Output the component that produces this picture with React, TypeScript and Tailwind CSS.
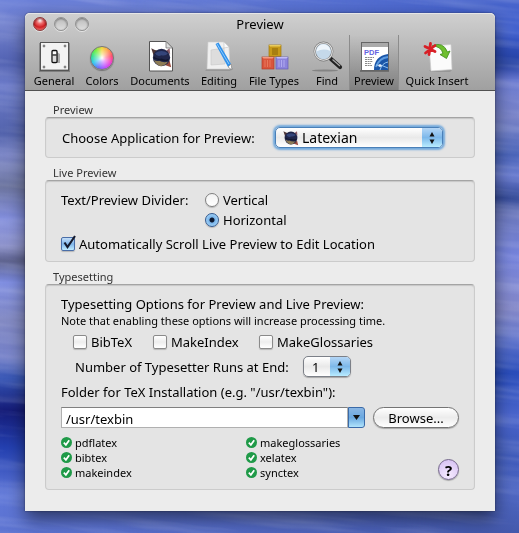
import { useState } from "react";
import type { ReactNode } from "react";

function Wallpaper() {
  return (
    <svg aria-hidden="true" className="fixed inset-0 -z-10 h-full w-full" viewBox="0 0 519 533" preserveAspectRatio="none">
      <defs>
        <linearGradient id="wallLeft" x1="0" y1="0" x2="0" y2="1">
          <stop offset="0" stopColor="#6a7fd8" />
          <stop offset=".05" stopColor="#7180cc" />
          <stop offset=".12" stopColor="#5161b2" />
          <stop offset=".16" stopColor="#6d7cca" />
          <stop offset=".25" stopColor="#5363ac" />
          <stop offset=".29" stopColor="#7b86c6" />
          <stop offset=".35" stopColor="#6d759f" />
          <stop offset=".41" stopColor="#7f8bdb" />
          <stop offset=".46" stopColor="#8f94cc" />
          <stop offset=".49" stopColor="#5a5f8c" />
          <stop offset=".53" stopColor="#7c8be0" />
          <stop offset=".6" stopColor="#8188c2" />
          <stop offset=".67" stopColor="#7480c8" />
          <stop offset=".71" stopColor="#3554b4" />
          <stop offset=".77" stopColor="#151c78" />
          <stop offset=".84" stopColor="#2440b0" />
          <stop offset=".93" stopColor="#5f77d8" />
          <stop offset="1" stopColor="#5b72d0" />
        </linearGradient>
        <linearGradient id="wallRight" x1="0" y1="0" x2="0" y2="1">
          <stop offset="0" stopColor="#4a66cc" />
          <stop offset=".06" stopColor="#3a5acc" />
          <stop offset=".12" stopColor="#2440a2" />
          <stop offset=".15" stopColor="#6878d0" />
          <stop offset=".22" stopColor="#7a84c8" />
          <stop offset=".29" stopColor="#4862b8" />
          <stop offset=".33" stopColor="#6a7cd0" />
          <stop offset=".37" stopColor="#344a98" />
          <stop offset=".4" stopColor="#6c78bc" />
          <stop offset=".48" stopColor="#7583dc" />
          <stop offset=".58" stopColor="#8488c8" />
          <stop offset=".64" stopColor="#5f74cc" />
          <stop offset=".7" stopColor="#2347b8" />
          <stop offset=".78" stopColor="#4c66cc" />
          <stop offset=".85" stopColor="#3a56b8" />
          <stop offset=".92" stopColor="#5068c4" />
          <stop offset="1" stopColor="#4459ac" />
        </linearGradient>
        <linearGradient id="wallFade" x1="0" y1="0" x2="1" y2="0">
          <stop offset=".2" stopColor="#000" />
          <stop offset=".9" stopColor="#fff" />
        </linearGradient>
        <mask id="wallMask">
          <rect width="519" height="533" fill="url(#wallFade)" />
        </mask>
        <filter id="strokes" x="0" y="0" width="1" height="1">
          <feTurbulence type="fractalNoise" baseFrequency="0.008 0.09" numOctaves="3" seed="4" />
          <feColorMatrix values="0 0 0 0 .75  0 0 0 0 .78  0 0 0 0 .95  1.6 0 0 0 -.65" />
        </filter>
      </defs>
      <rect width="519" height="533" fill="url(#wallLeft)" />
      <rect width="519" height="533" fill="url(#wallRight)" mask="url(#wallMask)" />
      <g transform="rotate(6 260 266)">
        <rect x="-60" y="-60" width="640" height="660" filter="url(#strokes)" opacity=".28" />
      </g>
    </svg>
  );
}

function Planet() {
  return (
    <>
      <path d="M-9.500 -8.500 L-7 -1 L-1 -6 Q-6 -6 -9.500 -8.500Z" fill="#4d3536" />
      <path d="M9 9 L7.500 3 L3 7Z" fill="#9a4a3c" />
      <path d="M7.500 -8.500 L8 -3 L4 -6Z" fill="#8b5a65" />
      <circle r="8" fill="#20264a" />
      <path d="M-6 -4 Q0 -8 6 -4 Q4 -1 0 -2 Q-4 0 -6 -4Z" fill="#34457a" />
      <path d="M-7 2 Q-5 4 -2 3 Q1 5 6 4 Q3 8 -1 8 Q-6 6 -7 2Z" fill="#8d7c56" />
      <path d="M-7 -1 Q-4 2 0 1 Q4 3 7 1 L6 3 Q0 4 -7 1Z" fill="#12172f" />
    </>
  );
}

const icon = "block size-8 shrink-0 overflow-visible";

function SwitchIcon() {
  return (
    <svg viewBox="0 0 32 32" className={icon} aria-hidden="true">
      <rect x="1" y="3" width="31" height="29" fill="#000" opacity=".25" />
      <rect x="2.5" y="2.5" width="28" height="28" fill="#f3f3f3" stroke="#555" />
      <path d="M3 29.5H30" stroke="#b5b5b5" />
      {[[6, 6], [27, 6], [6, 27], [27, 27]].map(([x, y]) => (
        <circle key={`${x}-${y}`} cx={x} cy={y} r="1.2" fill="#555" stroke="#bbb" strokeWidth=".6" />
      ))}
      <path d="M19 12l3 2v9h-4z" fill="#aaa" />
      <rect x="14" y="10.5" width="5" height="12" rx="1" fill="#fff" stroke="#111" strokeWidth="1.3" />
      <path d="M14.5 15h4" stroke="#111" strokeWidth="1.3" />
      <rect x="15" y="16" width="3" height="5" fill="#ddd" />
    </svg>
  );
}

function ColorsIcon() {
  return (
    <span className="flex size-8 items-end justify-center pb-0.5" aria-hidden="true">
      <span className="size-6 rounded-full border border-[#777] bg-[radial-gradient(circle,#fff_0%,#ffffff88_25%,#ffffff00_65%),conic-gradient(from_0deg,#f5d840,#ff9a50,#ff4a70,#ee40d0,#c050ff,#7070ff,#30c8f0,#30e090,#70f040,#f5d840)] shadow-[0_1px_1px_#0005]" />
    </span>
  );
}

function DocumentIcon() {
  return (
    <svg viewBox="0 0 32 32" className={icon} aria-hidden="true">
      <path d="M5.5 1.5H22L28.5 8V31H5.5Z" fill="#fff" stroke="#555" />
      <path d="M22 1.5V8h6.5Z" fill="#ddd" stroke="#777" strokeWidth=".8" />
      <g transform="translate(17.5 17.5) scale(1.08)">
        <Planet />
      </g>
    </svg>
  );
}

function EditingIcon() {
  return (
    <svg viewBox="0 0 32 32" className={icon} aria-hidden="true">
      <path d="M2 31L5 28H30L27 31Z" fill="#888" opacity=".6" />
      <path d="M5 2H21L26 7L27 29H4Z" fill="#f0f0f0" stroke="#ccc" strokeWidth=".6" />
      <path d="M8 10L21 8L22 24L8 25Z" fill="#ddd" stroke="#c6c6c6" strokeWidth=".6" />
      <path d="M21 2v6l5-1Z" fill="#fafafa" stroke="#bbb" strokeWidth=".5" />
      <path d="M12.5 4L15.5 2.5L28 24L25 27Z" fill="#3091ea" />
      <path d="M14 4L26 24" stroke="#8ccaff" strokeWidth="1" />
      <path d="M25 27L28 24L29 30Z" fill="#fff" stroke="#777" strokeWidth=".6" />
    </svg>
  );
}

function BlocksIcon() {
  return (
    <svg viewBox="0 0 32 32" className={icon} aria-hidden="true">
      <rect x="11" y="5" width="12" height="11.5" fill="#c79a19" stroke="#a27a10" strokeWidth=".7" />
      <rect x="14" y="8" width="6" height="7" fill="#a87f10" />
      <path d="M11 5h12l-1 1.5H12Z" fill="#e8cc60" />
      <rect x="4" y="17" width="12" height="12" fill="#d9553c" stroke="#b23c2a" strokeWidth=".7" />
      <path d="M7 20v7M9.500 20v7M12 20v7" stroke="#e8785c" />
      <path d="M4 17h12l-1.500 1.500h-9Z" fill="#f39a80" />
      <rect x="18" y="17" width="12" height="12" fill="#8c84dc" stroke="#655cb4" strokeWidth=".7" />
      <path d="M21 20v7M23.500 20v7M26 20v7" stroke="#b0aaf0" />
      <path d="M18 17h12l-1.500 1.500h-9Z" fill="#c2bdf8" />
    </svg>
  );
}

function FindIcon() {
  return (
    <svg viewBox="0 0 32 32" className={icon} aria-hidden="true">
      <ellipse cx="14" cy="30.5" rx="13" ry="1" fill="#555" opacity=".45" />
      <path d="M20 19L29 27" stroke="#222" strokeWidth="4.2" strokeLinecap="round" />
      <path d="M21.5 19.500L29 26" stroke="#aaa" strokeWidth="1.2" />
      <circle cx="12.5" cy="11.5" r="8.8" fill="#c5d9ea" stroke="#777" strokeWidth="2.2" />
      <circle cx="12.5" cy="11.5" r="8.8" fill="none" stroke="#e4e4e4" strokeWidth="1.1" />
      <path d="M5.500 11.500a7 7 0 0 1 14-.5Q12 8 5.500 11.500Z" fill="#eef5fb" />
    </svg>
  );
}

function PdfIcon() {
  return (
    <svg viewBox="0 0 32 32" className={icon} aria-hidden="true">
      <rect x="2" y="30" width="29" height="2" fill="#000" opacity=".25" />
      <rect x="3.5" y="2.5" width="27" height="28" fill="#fff" stroke="#666" />
      <rect x="4" y="3" width="26" height="4" fill="#aaa" />
      <text x="6" y="14.5" fontSize="7.5" fontWeight="bold" fill="#6463e0" fontFamily="Liberation Sans, sans-serif">PDF</text>
      <path d="M7 17.5h9M7 19.5h7M7 21.5h8M7 23.5h6M7 25.5h7" stroke="#888" strokeDasharray="2 .6" />
      <path d="M30 14Q16 16 16 30H30Z" fill="#1a56a8" />
      <path d="M30 17Q21 18 18 27" fill="none" stroke="#5d9be0" strokeWidth="2" />
      <path d="M30 22Q24 23 22 30M18 25Q25 25 30 28" fill="none" stroke="#9ccdf6" strokeWidth=".9" />
      <circle cx="22" cy="25.5" r="1.6" fill="#fff" opacity=".8" />
    </svg>
  );
}

function InsertIcon() {
  return (
    <svg viewBox="0 0 32 32" className={icon} aria-hidden="true">
      <path d="M8 30L31 30L29 32H10Z" fill="#777" opacity=".4" />
      <path d="M8 6L30 4.5L31 29.5L10 31Z" fill="#fbfbfb" stroke="#ccc" strokeWidth=".7" />
      <path d="M11 6Q22 1 26.5 12L29 11L25.5 18.5L19 14.5L22 13.5Q20 6 11 6Z" fill="#6fbf30" stroke="#3c8a1c" strokeWidth=".8" />
      <path d="M9.500 3.500L8 14.500M4 6.500L14 11.500M14 5.500L4.500 13" stroke="#d81f26" strokeWidth="2.800" strokeLinecap="round" />
    </svg>
  );
}

const tools: { label: string; width: string; art: ReactNode }[] = [
  { label: "General", width: "w-[50px]", art: <SwitchIcon /> },
  { label: "Colors", width: "w-[46px]", art: <ColorsIcon /> },
  { label: "Documents", width: "w-[70px]", art: <DocumentIcon /> },
  { label: "Editing", width: "w-[48px]", art: <EditingIcon /> },
  { label: "File Types", width: "w-[62px]", art: <BlocksIcon /> },
  { label: "Find", width: "w-[44px]", art: <FindIcon /> },
  { label: "Preview", width: "w-[50px]", art: <PdfIcon /> },
  { label: "Quick Insert", width: "w-[76px]", art: <InsertIcon /> },
];

function TrafficLight({ label, tone }: { label: string; tone: string }) {
  return (
    <button
      aria-label={label}
      className={`size-3.5 rounded-full border shadow-[0_1px_0_#fff8,inset_0_1px_2px_#0006] ${tone}`}
    />
  );
}

function Header() {
  const [active, setActive] = useState("Preview");
  return (
    <header className="rounded-t-[5px] border-b border-[#515151] bg-linear-to-b from-[#d0d0d0] to-[#a0a0a0] shadow-[inset_0_1px_0_#e6e6e6]">
      <div className="grid h-[22px] grid-cols-[1fr_auto_1fr] items-center px-2">
        <div className="flex gap-[7px]">
          <TrafficLight label="Close" tone="border-[#8e3a3a] bg-[radial-gradient(circle_at_50%_20%,#fff_0%,#ee6a6a_30%,#d01f22_60%,#ff9c94_100%)]" />
          <TrafficLight label="Minimize" tone="border-[#929292] bg-linear-to-b from-[#bcbcbc] to-[#dedede]" />
          <TrafficLight label="Zoom" tone="border-[#929292] bg-linear-to-b from-[#bcbcbc] to-[#dedede]" />
        </div>
        <h1 className="text-[13px]">Preview</h1>
      </div>
      <nav className="flex h-[55px] pl-1" aria-label="Preference panes">
        {tools.map((t) => (
          <button
            key={t.label}
            aria-pressed={active === t.label}
            onClick={() => setActive(t.label)}
            className={`flex shrink-0 flex-col items-center pt-[5px] text-[11px] leading-[18px] whitespace-nowrap ${t.width} ${
              active === t.label
                ? "border-x border-[#8c8c8c] bg-linear-to-b from-[#0000] to-[#0003]"
                : ""
            }`}
          >
            {t.art}
            {t.label}
          </button>
        ))}
      </nav>
    </header>
  );
}

function Group({ title, className, children }: { title: string; className: string; children: ReactNode }) {
  return (
    <section>
      <h2 className="pl-2 text-[11px] leading-[14px] text-[#333]">{title}</h2>
      <div className={`rounded-[4px] border border-[#cbcbcb] border-t-[#a4a4a4] bg-[#e4e4e4] px-[15px] shadow-[inset_0_1px_1px_#0002] ${className}`}>
        {children}
      </div>
    </section>
  );
}

function Arrows() {
  return (
    <span className="pointer-events-none absolute inset-y-px right-px flex w-5 items-center justify-center rounded-r-[4px] bg-linear-to-b from-[#b4d6f6] via-[#7db8ea] to-[#b8ecff]">
      <svg viewBox="0 0 6 12" className="h-3 w-1.5" aria-hidden="true">
        <path d="M3 0L5.500 4.500H.5ZM3 12L.5 7.500H5.500Z" fill="#111" />
      </svg>
    </span>
  );
}

const selectLook =
  "h-[21px] w-full appearance-none rounded-[5px] border bg-linear-to-b from-white via-[#e9e9e9] to-white outline-none";

function CheckBox({ label, defaultChecked }: { label: string; defaultChecked?: boolean }) {
  return (
    <label className="flex items-center gap-1">
      <span className="relative flex size-3.5">
        <input
          type="checkbox"
          defaultChecked={defaultChecked}
          className="peer size-3.5 appearance-none rounded-[2px] border border-[#8a8a8a] bg-linear-to-b from-white via-[#ededed] to-white shadow-[0_1px_1px_#0003] checked:border-[#4a6ea8] checked:from-[#c4def8] checked:via-[#80b6ea] checked:to-[#c0ecff]"
        />
        <svg viewBox="0 0 16 16" className="pointer-events-none absolute -top-0.5 left-0 hidden size-4 peer-checked:block" aria-hidden="true">
          <path d="M3.500 7.500L6.500 12L14 1" fill="none" stroke="#151a2c" strokeWidth="2.100" />
        </svg>
      </span>
      {label}
    </label>
  );
}

function Radio({ label, defaultChecked }: { label: string; defaultChecked?: boolean }) {
  return (
    <label className="flex items-center gap-1">
      <input
        type="radio"
        name="divider"
        defaultChecked={defaultChecked}
        className="size-3.5 appearance-none rounded-full border border-[#808080] bg-linear-to-b from-[#f2f2f2] to-white shadow-[0_1px_1px_#0003] checked:border-[#33598f] checked:bg-[radial-gradient(circle,#0c1830_0_2px,#7ab4ea_3px,#a8d8fa_7px)]"
      />
      {label}
    </label>
  );
}

function Tool({ name }: { name: string }) {
  return (
    <li className="flex items-center gap-[3px]">
      <svg viewBox="0 0 11 11" className="size-[11px]" aria-hidden="true">
        <circle cx="5.5" cy="5.5" r="5.5" fill="#1f9a48" />
        <path d="M2.800 5.600L4.900 7.800L8.200 3.200" fill="none" stroke="#fff" strokeWidth="1.700" />
      </svg>
      {name}
    </li>
  );
}

export default function App() {
  return (
    <div className="isolate flex min-h-screen flex-col px-6 pt-[13px] pb-[22px] font-['Noto_Sans','Open_Sans',sans-serif] text-[13px] leading-5 text-black">
      <Wallpaper />
      <main className="ml-px flex flex-1 flex-col rounded-t-[5px] bg-[#ececec] shadow-[0_8px_18px_#0008,0_0_2px_#0008]">
        <Header />
        <div className="flex flex-col gap-2 px-5 pt-3 pb-5">
          <Group title="Preview" className="flex h-[41px] items-center gap-3.5 pl-4">
            <label htmlFor="app" className="w-[199px] whitespace-nowrap">Choose Application for Preview:</label>
            <span className="relative w-[168px]">
              <select id="app" className={`${selectLook} block border-[#4a80b8] pl-[26px] text-[14px] shadow-[0_0_2px_2px_#72a9dc]`}>
                <option>Latexian</option>
              </select>
              <svg viewBox="-10 -10 20 20" className="pointer-events-none absolute top-[3px] left-2 size-4" aria-hidden="true">
                <Planet />
              </svg>
              <Arrows />
            </span>
          </Group>

          <Group title="Live Preview" className="flex h-[82px] flex-col pt-[9px]">
            <fieldset className="flex gap-2">
              <legend className="float-left w-[136px]">Text/Preview Divider:</legend>
              <div>
                <Radio label="Vertical" />
                <Radio label="Horizontal" defaultChecked />
              </div>
            </fieldset>
            <div className="pt-1">
              <CheckBox label="Automatically Scroll Live Preview to Edit Location" defaultChecked />
            </div>
          </Group>

          <Group title="Typesetting" className="pt-[9px] pb-[9px]">
            <h3>Typesetting Options for Preview and Live Preview:</h3>
            <p className="text-[11px] leading-[14px]">Note that enabling these options will increase processing time.</p>
            <div className="grid grid-cols-[80px_106px_1fr] pt-1 pl-3">
              <CheckBox label="BibTeX" />
              <CheckBox label="MakeIndex" />
              <CheckBox label="MakeGlossaries" />
            </div>
            <div className="flex items-center gap-2 pt-1 pl-3.5">
              <label htmlFor="runs" className="w-[220px]">Number of Typesetter Runs at End:</label>
              <span className="relative w-12">
                <select id="runs" defaultValue="1" className={`${selectLook} block border-[#7c8088] pl-2 shadow-[0_1px_1px_#0004]`}>
                  <option>1</option>
                  <option>2</option>
                  <option>3</option>
                </select>
                <Arrows />
              </span>
            </div>
            <label htmlFor="folder" className="block pt-[5px]">Folder for TeX Installation (e.g. "/usr/texbin"):</label>
            <div className="flex gap-2 pt-[5px]">
              <div className="flex h-[21px] flex-1">
                <input id="folder" defaultValue="/usr/texbin" className="min-w-0 flex-1 border border-[#b0b0b0] border-t-[#808080] bg-white px-1 pt-0.5 outline-none" />
                <button aria-label="Show folders" className="flex w-[17px] items-center justify-center rounded-r-[3px] border border-[#3a6aa8] bg-linear-to-b from-[#8ab6e4] via-[#6aa8e0] to-[#b0e4fc]">
                  <svg viewBox="0 0 7 5" className="h-[5px] w-[7px]" aria-hidden="true">
                    <path d="M0 0H7L3.500 5Z" fill="#111" />
                  </svg>
                </button>
              </div>
              <button className="h-[21px] w-[86px] rounded-full border border-[#747474] bg-linear-to-b from-white via-[#ececec] to-white leading-[18px] shadow-[0_1px_1px_#0004]">
                Browse...
              </button>
            </div>
            <div className="flex items-end justify-between pt-[7px]">
              <ul className="grid flex-1 grid-flow-col grid-cols-[185px_1fr] grid-rows-3 text-[11px] leading-[15px]">
                {["pdflatex", "bibtex", "makeindex", "makeglossaries", "xelatex", "synctex"].map((n) => (
                  <Tool key={n} name={n} />
                ))}
              </ul>
              <button aria-label="Help" className="size-[21px] rounded-full border border-[#75678c] bg-[radial-gradient(circle_at_50%_80%,#f6eaff,#d3bdf2)] text-[15px] leading-[18px] font-bold shadow-[0_1px_1px_#0004]">
                ?
              </button>
            </div>
          </Group>
        </div>
      </main>
    </div>
  );
}
